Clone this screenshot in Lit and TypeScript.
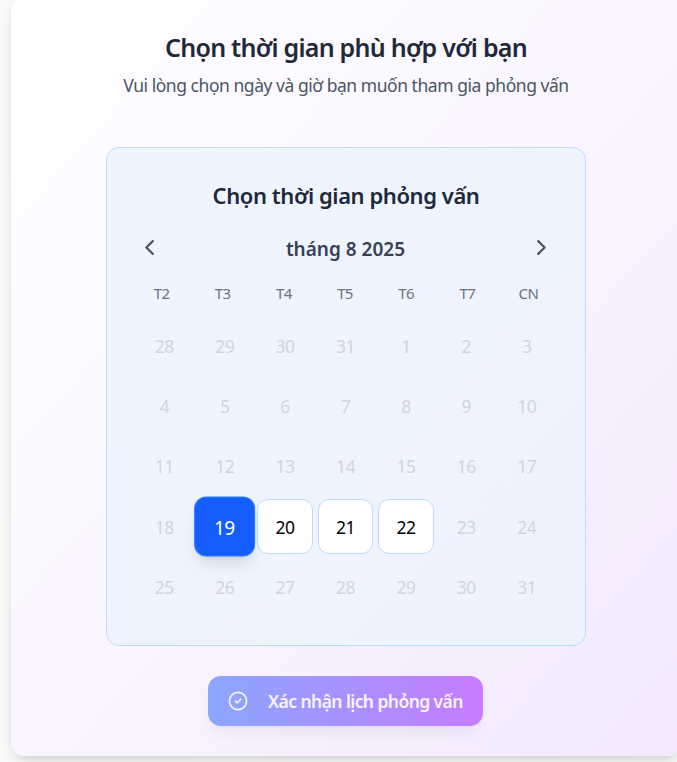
import { LitElement, html, css } from "lit";
import { customElement, state } from "lit/decorators.js";
import { classMap } from "lit/directives/class-map.js";

interface Day {
  label: number;
  open: boolean;
}

const WEEKDAYS = ["T2", "T3", "T4", "T5", "T6", "T7", "CN"];

const DAYS: Day[] = [
  28, 29, 30, 31,
  ...Array.from({ length: 31 }, (_, i) => i + 1),
].map((label, i) => ({ label, open: i >= 22 && i <= 25 }));

@customElement("app-root")
export class AppRoot extends LitElement {
  @state() private selected = 22;

  static styles = css`
    :host {
      display: block;
      width: 677px;
      height: 762px;
      overflow: hidden;
      background: #fafafa;
      font-family: "Noto Sans", "Open Sans", sans-serif;
      color: #1e2939;
    }
    * {
      box-sizing: border-box;
    }
    button {
      font: inherit;
      color: inherit;
      border: 0;
      background: none;
      padding: 0;
      margin: 0;
      cursor: pointer;
    }
    .card {
      width: 670px;
      height: 758px;
      margin: -2px 0 0 11px;
      padding-top: 32px;
      display: flex;
      flex-direction: column;
      align-items: center;
      border-radius: 13px;
      background: linear-gradient(to bottom right, #fff, #faf5ff, #f3e8ff);
      box-shadow: 0 10px 16px -3px rgba(0, 0, 0, 0.1),
        0 4px 6px -4px rgba(0, 0, 0, 0.1), 0 0 14px rgba(0, 0, 0, 0.04);
    }
    h1,
    h2,
    p {
      margin: 0;
      white-space: nowrap;
    }
    h1 {
      font-size: 25px;
      line-height: 34px;
      font-weight: 600;
      letter-spacing: -0.74px;
    }
    .hint {
      margin-top: 8px;
      font-size: 17.5px;
      line-height: 26px;
      color: #4a5565;
      letter-spacing: -0.46px;
    }
    .picker {
      width: 480px;
      height: 499px;
      margin-top: 49px;
      padding: 32px 25px 0;
      display: flex;
      flex-direction: column;
      border: 1px solid #bedbff;
      border-radius: 13px;
      background: linear-gradient(to bottom right, #eff6ff, #eef2ff);
    }
    h2 {
      font-size: 22px;
      line-height: 30px;
      font-weight: 600;
      text-align: center;
      letter-spacing: -0.43px;
    }
    .nav {
      margin-top: 24px;
      height: 30px;
      padding: 0 8px 0 7px;
      display: flex;
      align-items: center;
      justify-content: space-between;
      color: #4a5565;
    }
    .nav button {
      width: 21px;
      height: 21px;
      margin-bottom: 3px;
    }
    .nav svg {
      display: block;
      width: 21px;
      height: 21px;
    }
    .month {
      font-size: 19px;
      font-weight: 600;
      color: #364153;
    }
    .weekdays {
      margin: 18px 1px 0 -1px;
      display: grid;
      grid-template-columns: repeat(7, 1fr);
      text-align: center;
      font-size: 15px;
      line-height: 22px;
      color: #6a7282;
      letter-spacing: -0.6px;
    }
    .days {
      margin: 14px 0 0 4.6px;
      display: grid;
      grid-template-columns: repeat(7, 55.5px);
      grid-auto-rows: 55.2px;
      gap: 5px 4.9px;
    }
    .day {
      display: flex;
      align-items: center;
      justify-content: center;
      border-radius: 11px;
      font-size: 17.5px;
      letter-spacing: -0.5px;
      padding-top: 1px;
      color: #d1d5dc;
    }
    .day.open {
      color: #000;
      background: #fff;
      border: 1px solid #bedbff;
    }
    .day.selected {
      color: #fff;
      background: #155dfc;
      border-color: #2b7fff;
      transform: translateX(-0.4px) scale(1.09);
      box-shadow: 0 10px 15px -3px rgba(0, 0, 0, 0.1),
        0 4px 6px -4px rgba(0, 0, 0, 0.1);
    }
    .confirm {
      width: 275px;
      height: 50px;
      margin: 30px 1px 0 0;
      padding-left: 20px;
      display: flex;
      align-items: center;
      gap: 20px;
      flex: none;
      border-radius: 13px;
      background: linear-gradient(to right, #8ba6ff, #c67cff);
      box-shadow: 0 10px 15px -3px rgba(0, 0, 0, 0.05),
        0 4px 6px -4px rgba(0, 0, 0, 0.05);
      color: #f9f4ff;
      font-size: 17.5px;
      font-weight: 600;
      letter-spacing: -0.57px;
      white-space: nowrap;
    }
    .confirm svg {
      width: 20px;
      height: 20px;
      flex: none;
    }
  `;

  private arrow(path: string, label: string) {
    return html`<button aria-label=${label}>
      <svg viewBox="0 0 24 24" fill="none" stroke="currentColor" stroke-width="2.5" stroke-linecap="round" stroke-linejoin="round">
        <path d=${path}></path>
      </svg>
    </button>`;
  }

  render() {
    return html`<main class="card">
      <h1>Chọn thời gian phù hợp với bạn</h1>
      <p class="hint">Vui lòng chọn ngày và giờ bạn muốn tham gia phỏng vấn</p>
      <section class="picker">
        <h2>Chọn thời gian phỏng vấn</h2>
        <div class="nav">
          ${this.arrow("M15.8 4.7L8.4 12l7.4 7.3", "Tháng trước")}
          <span class="month">tháng 8 2025</span>
          ${this.arrow("M8.2 4.7l7.4 7.3-7.4 7.3", "Tháng sau")}
        </div>
        <div class="weekdays">${WEEKDAYS.map((d) => html`<span>${d}</span>`)}</div>
        <div class="days">
          ${DAYS.map(
            (d, i) => html`<button
              class=${classMap({ day: true, open: d.open, selected: i === this.selected })}
              ?disabled=${!d.open}
              @click=${() => (this.selected = i)}
            >${d.label}</button>`
          )}
        </div>
      </section>
      <button class="confirm">
        <svg viewBox="0 0 20 20" fill="none" stroke="currentColor" stroke-width="1.6" stroke-linecap="round" stroke-linejoin="round">
          <circle cx="10" cy="10" r="8.6"></circle>
          <path d="M7.3 10l1.9 1.8 3.6-3.7"></path>
        </svg>
        <span>Xác nhận lịch phỏng vấn</span>
      </button>
    </main>`;
  }
}
